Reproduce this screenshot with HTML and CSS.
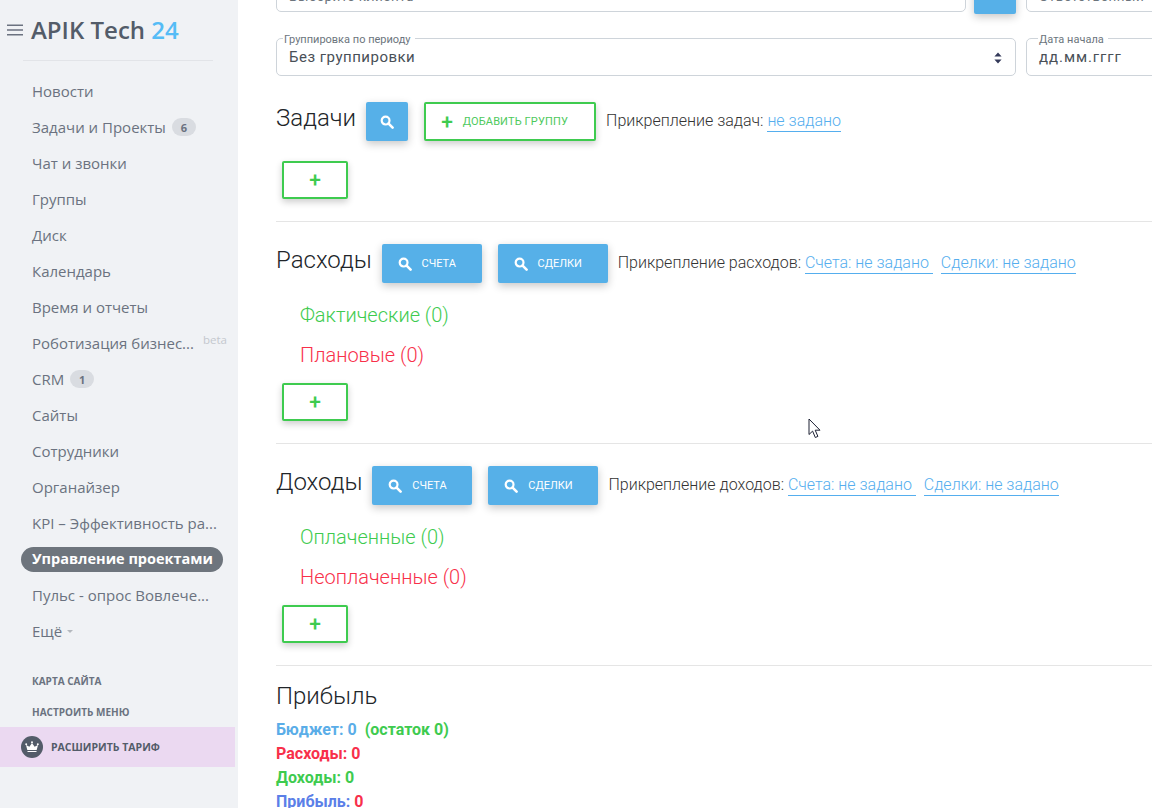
FILE: index.html
```html
<!DOCTYPE html>
<html lang="ru">
<head>
<meta charset="utf-8">
<title>Управление проектами</title>
<link rel="stylesheet" href="styles.css">
</head>
<body>
<div class="app">
  <aside class="sidebar">
    <div class="brand">
      <svg class="burger" width="16" height="12" viewBox="0 0 16 12"><path d="M0 1.2h16M0 6h16M0 10.8h16" stroke="#6b7280" stroke-width="1.4"/></svg>
      <span class="brand-name">APIK Tech <span class="brand-num">24</span></span>
    </div>
    <nav class="menu">
      <a class="item">Новости</a>
      <a class="item">Задачи и Проекты <span class="badge">6</span></a>
      <a class="item">Чат и звонки</a>
      <a class="item">Группы</a>
      <a class="item">Диск</a>
      <a class="item">Календарь</a>
      <a class="item">Время и отчеты</a>
      <a class="item">Роботизация бизнес...<sup class="beta">beta</sup></a>
      <a class="item">CRM <span class="badge">1</span></a>
      <a class="item">Сайты</a>
      <a class="item">Сотрудники</a>
      <a class="item">Органайзер</a>
      <a class="item">KPI – Эффективность ра...</a>
      <a class="item item-active"><span class="pill">Управление проектами</span></a>
      <a class="item">Пульс - опрос Вовлече...</a>
      <a class="item">Ещё <span class="caret"></span></a>
    </nav>
    <div class="side-links">
      <a class="side-link">КАРТА САЙТА</a>
      <a class="side-link side-link-last">НАСТРОИТЬ МЕНЮ</a>
    </div>
    <div class="upgrade">
      <span class="crown"><svg width="14" height="12" viewBox="0 0 14 12"><path d="M2.3 9 1 4l3.4 1.8L7 2l2.6 3.8L13 4l-1.3 5z" fill="#fff"/><circle cx="1.2" cy="3.2" r="1" fill="#fff"/><circle cx="7" cy="1.2" r="1" fill="#fff"/><circle cx="12.8" cy="3.2" r="1" fill="#fff"/><path d="M2.5 10h9v1h-9z" fill="#fff"/></svg></span>
      <span class="upgrade-text">РАСШИРИТЬ ТАРИФ</span>
    </div>
  </aside>
  <main class="main">
    <div class="filters">
      <div class="field field-client"><span class="value value-muted">Выберите клиента</span></div>
      <button class="btn btn-top"></button>
      <div class="field field-side"><span class="value value-muted">Ответственный</span></div>
    </div>
    <div class="filters">
      <div class="field field-group">
        <span class="legend">Группировка по периоду</span>
        <span class="value">Без группировки</span>
        <svg class="updown" width="8" height="12" viewBox="0 0 8 12"><path d="M4 0.5 7.6 4.6H.4zM4 11.5.4 7.4h7.2z" fill="#343a5a"/></svg>
      </div>
      <div class="field field-side">
        <span class="legend legend-date">Дата начала</span>
        <span class="value value-date">дд.мм.гггг</span>
      </div>
    </div>

    <section class="section">
      <div class="head">
        <h2 class="title">Задачи</h2>
        <button class="btn btn-icon"><svg class="mag" viewBox="0 0 14 14"><circle cx="5.6" cy="5.6" r="3.9" fill="none" stroke="#fff" stroke-width="2.2"/><path d="m8.6 8.6 4 4" stroke="#fff" stroke-width="2.6" stroke-linecap="round"/></svg></button>
        <button class="btn-outline btn-add-group"><span class="plus">+</span><span class="add-label">ДОБАВИТЬ ГРУППУ</span></button>
        <span class="attach attach-tasks">Прикрепление задач: <a class="link">не задано</a></span>
      </div>
      <button class="btn-outline btn-plus btn-plus-tasks"><span class="plus">+</span></button>
    </section>

    <section class="section">
      <div class="head">
        <h2 class="title">Расходы</h2>
        <button class="btn btn-wide"><svg class="mag" viewBox="0 0 14 14"><circle cx="5.6" cy="5.6" r="3.9" fill="none" stroke="#fff" stroke-width="2.2"/><path d="m8.6 8.6 4 4" stroke="#fff" stroke-width="2.6" stroke-linecap="round"/></svg>СЧЕТА</button>
        <button class="btn btn-wider"><svg class="mag" viewBox="0 0 14 14"><circle cx="5.6" cy="5.6" r="3.9" fill="none" stroke="#fff" stroke-width="2.2"/><path d="m8.6 8.6 4 4" stroke="#fff" stroke-width="2.6" stroke-linecap="round"/></svg>СДЕЛКИ</button>
        <span class="attach">Прикрепление расходов: <a class="link">Счета: не задано&nbsp;</a><a class="link link-next">Сделки: не задано</a></span>
      </div>
      <div class="groups">
        <div class="group group-green">Фактические (0)</div>
        <div class="group group-red">Плановые (0)</div>
      </div>
      <button class="btn-outline btn-plus"><span class="plus">+</span></button>
    </section>

    <section class="section">
      <div class="head">
        <h2 class="title">Доходы</h2>
        <button class="btn btn-wide"><svg class="mag" viewBox="0 0 14 14"><circle cx="5.6" cy="5.6" r="3.9" fill="none" stroke="#fff" stroke-width="2.2"/><path d="m8.6 8.6 4 4" stroke="#fff" stroke-width="2.6" stroke-linecap="round"/></svg>СЧЕТА</button>
        <button class="btn btn-wider"><svg class="mag" viewBox="0 0 14 14"><circle cx="5.6" cy="5.6" r="3.9" fill="none" stroke="#fff" stroke-width="2.2"/><path d="m8.6 8.6 4 4" stroke="#fff" stroke-width="2.6" stroke-linecap="round"/></svg>СДЕЛКИ</button>
        <span class="attach">Прикрепление доходов: <a class="link">Счета: не задано&nbsp;</a><a class="link link-next">Сделки: не задано</a></span>
      </div>
      <div class="groups">
        <div class="group group-green">Оплаченные (0)</div>
        <div class="group group-red">Неоплаченные (0)</div>
      </div>
      <button class="btn-outline btn-plus"><span class="plus">+</span></button>
    </section>

    <section class="section section-profit">
      <h2 class="title">Прибыль</h2>
      <div class="totals">
        <div class="total total-blue">Бюджет: 0 <span class="total-green total-rest">(остаток 0)</span></div>
        <div class="total total-red">Расходы: 0</div>
        <div class="total total-green">Доходы: 0</div>
        <div class="total total-indigo">Прибыль: <span class="total-red">0</span></div>
      </div>
    </section>
  </main>
</div>
<svg class="cursor" width="14" height="21" viewBox="0 0 14 21"><path d="M1 1v15.5l3.6-3.4 2.7 6.4 2.6-1.1-2.7-6.2H12z" fill="#fff" stroke="#1c2033" stroke-width="1"/></svg>
</body>
</html>
```
FILE: styles.css
```css
* { box-sizing: border-box; }
html, body { margin: 0; height: 100%; overflow: hidden; background: #fff; }
body { font-family: "Roboto", "Liberation Sans", sans-serif; color: #333; position: relative; }
.app { display: flex; height: 808px; overflow: hidden; }
a { color: inherit; text-decoration: none; }

/* sidebar */
.sidebar { width: 238px; flex: none; background: #f0f2f5; font-family: "Open Sans", sans-serif; color: #6b7280; }
.brand { display: flex; align-items: center; gap: 8px; padding: 0 0 1px 7px; height: 61px; position: relative; }
.brand::after { content: ""; position: absolute; left: 23px; width: 190px; bottom: 0; height: 1px; background: #e2e4e8; }
.brand-name { font-size: 24px; font-weight: 600; color: #535c69; line-height: 32px; }
.brand-num { color: #55bcf6; }
.menu { display: flex; flex-direction: column; padding-top: 12px; }
.item { height: 36px; display: flex; align-items: center; padding-left: 32px; font-size: 15px; color: #6b7280; white-space: nowrap; position: relative; }
.badge { display: inline-flex; align-items: center; justify-content: center; width: 24px; height: 18px; border-radius: 9px; background: #d9dce1; font-size: 11px; font-weight: 700; color: #6b7280; margin-left: 6px; }
.beta { position: absolute; left: 203px; top: 7px; font-size: 11.5px; color: #c4c8ce; }
.item-active { padding-left: 21px; }
.pill { background: #6e757d; color: #fff; font-weight: 700; border-radius: 13px; height: 25px; line-height: 24px; padding: 0 10px 0 11px; font-size: 14.5px; width: 202px; }
.caret { display: inline-block; margin-left: 5px; border: 3px solid transparent; border-top-color: #b4b8be; border-bottom: 0; }
.side-links { display: flex; flex-direction: column; padding: 17px 0 0 32px; }
.side-link { font-size: 10px; font-weight: 700; color: #6b7280; height: 31px; line-height: 31px; }
.side-link-last { height: 30px; }
.upgrade { width: 235px; height: 40px; background: #ebd9f1; display: flex; align-items: center; padding-left: 21px; gap: 8px; }
.crown { width: 22px; height: 22px; border-radius: 50%; background: #535c69; display: flex; align-items: center; justify-content: center; flex: none; }
.upgrade-text { font-size: 10.5px; font-weight: 700; color: #535c69; }

/* main */
.main { flex: none; width: 914px; margin-top: -26px; padding-left: 38px; }
.filters { display: flex; height: 38px; margin-bottom: 26px; width: 1000px; }
.field { position: relative; height: 38px; border: 1px solid #ced4da; border-radius: 5px; background: #fff; display: flex; align-items: center; padding: 0 12px 1px; flex: none; }
.field-client { width: 690px; }
.field-group { width: 740px; }
.field-side { width: 200px; margin-left: 10px; }
.value { font-size: 15px; color: #495057; letter-spacing: .5px; }
.value-muted { color: #6c757d; font-size: 13.5px; transform: translateY(3px); }
.value-date { letter-spacing: .9px; }
.legend { position: absolute; left: 6px; top: -6px; background: #fff; padding: 0 4px 0 1px; font-size: 11px; line-height: 13px; color: #6c757d; }
.legend-date { left: 11px; }
.updown { position: absolute; right: 13px; top: 13px; }
.btn { border: 0; background: #56b0e8; color: #fff; border-radius: 2px; height: 39px; display: flex; align-items: center; justify-content: center; gap: 10px; font: 400 11px "Roboto", sans-serif; box-shadow: 0 3px 8px rgba(0,0,0,.22); flex: none; padding: 0; }
.btn-top { width: 42px; margin-left: 8px; height: 40px; }
.btn-icon { width: 42px; }
.btn-wide { width: 100px; padding-right: 10px; }
.btn-wider { width: 110px; margin-left: 16px; padding-right: 10px; }
.mag { width: 14px; height: 14px; flex: none; }
.btn-outline { background: #fff; border: 2px solid #3ecb4f; border-radius: 2px; color: #4ec95c; display: flex; align-items: center; justify-content: center; box-shadow: 0 3px 7px rgba(0,0,0,.2); padding: 0; font: 400 11px "Roboto", sans-serif; }
.plus { font-size: 21px; font-weight: 500; line-height: 20px; color: #3ecb4f; }
.add-label { letter-spacing: .13px; }
.btn-add-group { width: 172px; height: 39px; gap: 10px; margin-left: 16px; padding-right: 11px; }
.btn-plus { width: 66px; height: 38px; margin-left: 6px; }
.btn-plus-tasks { margin-top: 20px; }
.section { padding-bottom: 22px; border-bottom: 1px solid #e5e5e5; margin-bottom: 22px; width: 1000px; }
.section-profit { border: 0; padding: 0; margin: 0; }
.head { display: flex; align-items: center; height: 39px; }
.title { margin: 0; font-size: 24px; font-weight: 300; color: #212529; line-height: 30px; margin-right: 10px; transform: translateY(-4px); }
.attach { font-size: 16px; font-weight: 300; color: #333; margin-left: 10px; white-space: nowrap; transform: translateY(-1px); }
.link { color: #55aeee; border-bottom: 1px solid #55aeee; padding-bottom: 1px; }
.link-next { margin-left: 8px; }
.groups { margin: 12px 0 8px; padding-left: 24px; }
.group { height: 40px; line-height: 40px; font-size: 20px; font-weight: 300; }
.group-green { color: #3ecb4f; }
.group-red { color: #f8304a; }
.section-profit .title { line-height: 30px; height: 36px; transform: translateY(-1px); margin-top: -6px; }
.totals { display: flex; flex-direction: column; }
.total { height: 24px; line-height: 24px; font-size: 16px; font-weight: 700; white-space: nowrap; }
.total-blue { color: #5aade8; }
.total-red { color: #f8304a; }
.total-green { color: #3ecb4f; }
.total-indigo { color: #5b7fe8; }
.total-rest { margin-left: 4px; }
.cursor { position: absolute; left: 808px; top: 418px; }
```
